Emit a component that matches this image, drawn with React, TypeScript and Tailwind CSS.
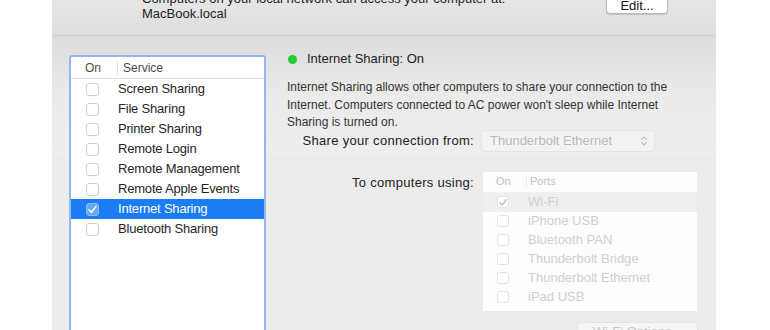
import React from 'react';

const services = [
  'Screen Sharing',
  'File Sharing',
  'Printer Sharing',
  'Remote Login',
  'Remote Management',
  'Remote Apple Events',
  'Internet Sharing',
  'Bluetooth Sharing',
];

const ports = ['Wi-Fi', 'iPhone USB', 'Bluetooth PAN', 'Thunderbolt Bridge', 'Thunderbolt Ethernet', 'iPad USB'];

const Check = ({ color }: { color: string }) => (
  <svg width="11" height="11" viewBox="0 0 11 11" fill="none">
    <path d="M2 5.8 L4.4 8.3 L9 2.4" stroke={color} strokeWidth="1.6" strokeLinecap="round" strokeLinejoin="round" />
  </svg>
);

const App: React.FC = () => {
  return (
    <div className="w-[770px] h-[330px] bg-white overflow-hidden font-['Liberation_Sans',Arial,sans-serif] text-[#262626]">
      <div className="ml-[52px] w-[664px] h-[330px] flex flex-col bg-[#ececec]">
        {/* Top band */}
        <div className="h-[36px] shrink-0 border-b border-[#cdcdcd] bg-gradient-to-b from-[#e6e6e6] to-[#dedede] flex">
          <div className="ml-[90px] mt-[-9px] text-[13px] leading-[15px] text-[#1e1e1e]">
            <div>Computers on your local network can access your computer at:</div>
            <div>MacBook.local</div>
          </div>
          <div className="ml-auto mr-[48px] mt-[-3px] h-[17px] w-[62px] rounded-[4px] border border-[#b9b9b9] bg-white shadow-[0_1px_1px_rgba(0,0,0,0.15)] text-[13px] leading-[15px] text-center text-[#111]">
            Edit...
          </div>
        </div>

        {/* Body */}
        <div className="flex-1 flex bg-gradient-to-b from-[#dcdcdc] via-[#ebebeb] to-[#eeeeee] bg-[length:100%_120px] bg-no-repeat">
          {/* Service list */}
          <div className="ml-[17px] mt-[19px] w-[198px] h-[300px] rounded-t-[3px] border-[2px] border-[#93b8ec] bg-white">
            <div className="flex h-[22px] items-center border-b border-[#e3e3e3] text-[12px] text-[#4a4a4a]">
              <span className="w-[46px] pl-[14px]">On</span>
              <span className="border-l border-[#e3e3e3] pl-[5px] leading-[14px]">Service</span>
            </div>
            {services.map((s) => {
              const sel = s === 'Internet Sharing';
              return (
                <div key={s} className={`flex h-[20px] items-center ${sel ? 'bg-[#1c7cf4] text-white' : ''}`}>
                  <span className="w-[47px] pl-[15px] flex">
                    <span
                      className={`w-[13px] h-[13px] rounded-[3px] flex items-center justify-center ${
                        sel ? 'bg-[#62a9f8] border border-[#8cc0fa]' : 'border border-[#cfcfcf] bg-white'
                      }`}
                    >
                      {sel && <Check color="#ffffff" />}
                    </span>
                  </span>
                  <span className="text-[13px] tracking-[-0.2px]">{s}</span>
                </div>
              );
            })}
          </div>

          {/* Detail pane */}
          <div className="ml-[21px] mt-[15px] flex-1 pr-[18px]">
            <div className="flex items-center h-[16px]">
              <span className="ml-[1px] w-[9px] h-[9px] rounded-full bg-[#26c93a]" />
              <span className="ml-[10px] text-[13px] text-[#222]">Internet Sharing: On</span>
            </div>
            <p className="mt-[12px] text-[12px] leading-[17.5px] text-[#333] w-[400px]">
              Internet Sharing allows other computers to share your connection to the Internet. Computers connected to AC power won't sleep while Internet Sharing is turned on.
            </p>
            <div className="mt-[-2px] flex items-center">
              <span className="w-[187px] text-right text-[13px] tracking-[0.3px] text-[#222]">Share your connection from:</span>
              <div className="ml-[7px] w-[174px] h-[22px] rounded-[4px] border border-[#e4e4e4] bg-[#f3f3f3] flex items-center pl-[8px] text-[13px] text-[#b9b9b9]">
                Thunderbolt Ethernet
                <svg className="ml-auto mr-[6px]" width="8" height="12" viewBox="0 0 8 12" fill="none">
                  <path d="M1.5 4.5 L4 2 L6.5 4.5 M1.5 7.5 L4 10 L6.5 7.5" stroke="#c4c4c4" strokeWidth="1.2" strokeLinecap="round" strokeLinejoin="round" />
                </svg>
              </div>
            </div>
            <div className="mt-[19px] flex items-start">
              <span className="w-[187px] text-right text-[13px] tracking-[0.3px] text-[#222] mt-[2px]">To computers using:</span>
              <div className="ml-[8px] w-[216px] h-[141px] border border-[#ececec] bg-[#fdfdfd] text-[13px] text-[#cfcfcf]">
                <div className="flex h-[21px] items-center border-b border-[#f0f0f0] text-[11px] text-[#c2c2c2]">
                  <span className="w-[43px] pl-[13px]">On</span>
                  <span className="border-l border-[#eeeeee] pl-[3px] leading-[13px]">Ports</span>
                </div>
                {ports.map((p, i) => (
                  <div key={p} className={`flex h-[19px] items-center ${i === 0 ? 'bg-[#efefef]' : ''}`}>
                    <span className="w-[45px] pl-[14px] flex">
                      <span className="w-[12px] h-[12px] rounded-[3px] border border-[#e2e2e2] bg-white flex items-center justify-center">
                        {i === 0 && <Check color="#bdbdbd" />}
                      </span>
                    </span>
                    <span>{p}</span>
                  </div>
                ))}
              </div>
            </div>
            <div className="mt-[10px] ml-[290px] w-[121px] h-[20px] rounded-[4px] border border-[#e4e4e4] bg-[#f6f6f6] text-center text-[13px] leading-[18px] text-[#c8c8c8]">
              Wi-Fi Options...
            </div>
          </div>
        </div>
      </div>
    </div>
  );
};

export default App;
